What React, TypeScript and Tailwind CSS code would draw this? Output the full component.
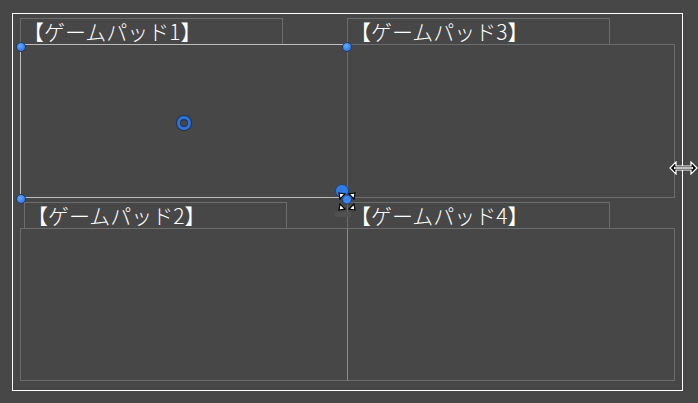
import React from "react";

const font = { fontFamily: '"Noto Sans CJK JP", "Noto Sans", sans-serif' };

// one cell of the 2x2 layout: title strip over a panel
const Pad = ({ label, titleClass, panelClass }: { label: string; titleClass: string; panelClass: string }) => (
  <div className="flex flex-col">
    <div className={`w-[263px] h-[27px] border border-[#6c6c6c] flex items-center pl-[2px] ${titleClass}`}>
      <span className="text-white text-[21px] font-light leading-none whitespace-nowrap">{label}</span>
    </div>
    <div className={`w-[328px] -mt-px border border-[#6c6c6c] ${panelClass}`} />
  </div>
);

const Dot = ({ pos }: { pos: string }) => (
  <div
    className={`absolute ${pos} w-[10px] h-[10px] rounded-full border border-[#1c3c6c] bg-[radial-gradient(circle_at_40%_35%,#64a8ff,#2468d8)]`}
  />
);

export default function App() {
  return (
    <div className="relative w-[698px] h-[403px] overflow-hidden bg-[#474747] pl-[12px] pt-[13px]" style={font}>
      {/* canvas bounds */}
      <div className="w-[671px] h-[378px] border border-white pl-[7px] pt-[4px]">
        <div className="grid grid-cols-[327px_327px] gap-y-[4px]">
          <Pad label="【ゲームパッド1】" titleClass="" panelClass="h-[154px] border-[#bdbdbd]" />
          <Pad label="【ゲームパッド3】" titleClass="" panelClass="h-[154px]" />
          <Pad label="【ゲームパッド2】" titleClass="ml-[4px]" panelClass="h-[153px]" />
          <Pad label="【ゲームパッド4】" titleClass="" panelClass="h-[153px] border-l-[#8e8e8e]" />
        </div>
      </div>

      {/* handles of the selected rect */}
      <Dot pos="left-[16px] top-[42px]" />
      <Dot pos="left-[342px] top-[42px]" />
      <Dot pos="left-[16px] top-[194px]" />

      {/* pivot */}
      <div className="absolute left-[177px] top-[116px] w-[14px] h-[14px] rounded-full border-[3px] border-[#2d72d9] shadow-[0_0_0_1px_#1b3358,inset_0_0_0_1px_#1b3358]" />

      {/* move handle */}
      <svg className="absolute left-[332px] top-[182px]" width="32" height="38" viewBox="0 0 32 38">
        <rect x="3" y="30" width="16" height="5" fill="#505050" />
        <circle cx="10" cy="9" r="6.5" fill="#2f7be6" stroke="#1b3c70" strokeWidth="0.8" />
        <g fill="white" stroke="black" strokeWidth="1.2" strokeLinejoin="miter">
          <path d="M7 11 L13 12 L8 17 Z" />
          <path d="M23 11 L17 12 L22 17 Z" />
          <path d="M7 28 L13 27 L8 22 Z" />
          <path d="M23 28 L17 27 L22 22 Z" />
        </g>
        <circle cx="15" cy="17.5" r="4.5" fill="#3a86f0" stroke="#1b3c70" strokeWidth="1" />
      </svg>

      {/* resize cursor */}
      <svg className="absolute left-[669px] top-[161px]" width="29" height="14" viewBox="0 0 29 14">
        <path
          d="M1 7 L7 1 L7 5 L22 5 L22 1 L28 7 L22 13 L22 9 L7 9 L7 13 Z"
          fill="black"
          stroke="white"
          strokeWidth="1.2"
        />
        <path d="M4.5 7 L6 5.5 L6 6.3 L23 6.3 L23 5.5 L24.5 7 L23 8.5 L23 7.7 L6 7.7 L6 8.5 Z" fill="white" />
      </svg>
    </div>
  );
}
